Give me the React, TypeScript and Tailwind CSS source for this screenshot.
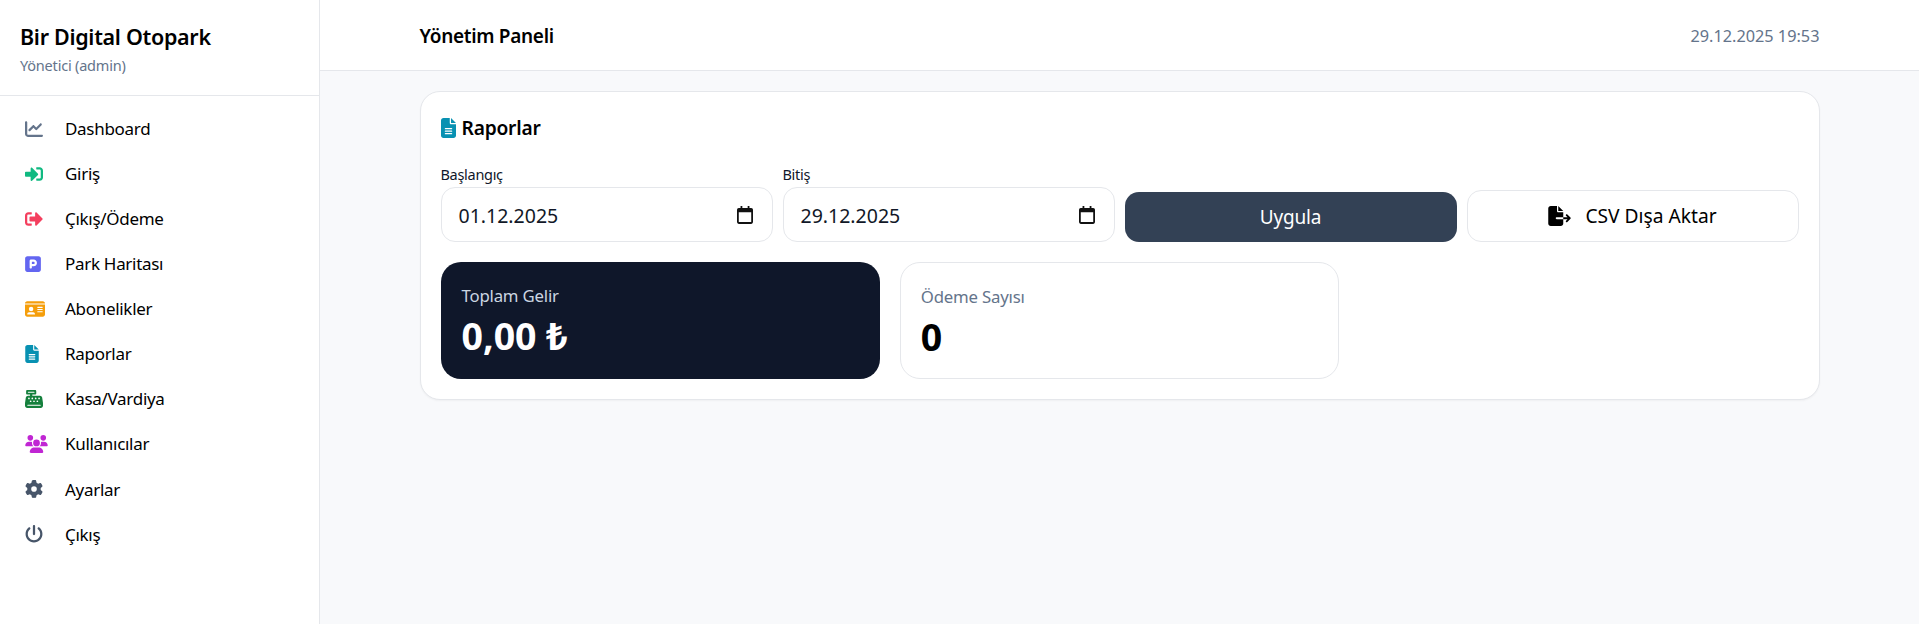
import type { IconType } from "react-icons";
import { FaSignInAlt, FaSignOutAlt } from "react-icons/fa";
import {
  FaCashRegister,
  FaChartLine,
  FaFileExport,
  FaFileLines,
  FaGear,
  FaIdCard,
  FaPowerOff,
  FaSquareParking,
  FaUsers,
} from "react-icons/fa6";

const FONT = "font-['Noto_Sans','Open_Sans',sans-serif]";

const menu: { label: string; icon: IconType; color: string }[] = [
  { label: "Dashboard", icon: FaChartLine, color: "w-[18px] text-[#64748b]" },
  { label: "Giriş", icon: FaSignInAlt, color: "w-[18px] text-[#10b981]" },
  { label: "Çıkış/Ödeme", icon: FaSignOutAlt, color: "w-[18px] text-[#f43f5e]" },
  { label: "Park Haritası", icon: FaSquareParking, color: "w-[16px] text-[#6366f1]" },
  { label: "Abonelikler", icon: FaIdCard, color: "w-[20px] text-[#f59e0b]" },
  { label: "Raporlar", icon: FaFileLines, color: "w-[14px] text-[#0891b2]" },
  { label: "Kasa/Vardiya", icon: FaCashRegister, color: "w-[18px] text-[#15803d]" },
  { label: "Kullanıcılar", icon: FaUsers, color: "w-[23px] text-[#c026d3]" },
  { label: "Ayarlar", icon: FaGear, color: "w-[18px] text-[#475569]" },
  { label: "Çıkış", icon: FaPowerOff, color: "w-[18px] text-[#475569]" },
];

function CalendarIcon() {
  return (
    <svg width="16" height="18" viewBox="0 0 18 20" fill="#111">
      <path d="M4 0h2v2h6V0h2v2h2a2 2 0 0 1 2 2v14a2 2 0 0 1-2 2H2a2 2 0 0 1-2-2V4a2 2 0 0 1 2-2h2V0zM2 7v11h14V7H2z" />
    </svg>
  );
}

function DateField({ label, value }: { label: string; value: string }) {
  return (
    <div>
      <div className="mb-[3px] text-[14.5px] leading-[19px] tracking-[-0.3px] text-[#0f172a]">{label}</div>
      <div className="flex h-[55px] items-center justify-between rounded-[14px] border border-[#e5e7eb] bg-white pr-[19px] pl-[17px] text-[19.5px] text-[#111827]">
        <span className="translate-y-px">{value}</span>
        <CalendarIcon />
      </div>
    </div>
  );
}

export default function App() {
  return (
    <div className={`flex h-[624px] overflow-hidden bg-[#f8f9fb] text-black ${FONT}`}>
      <aside className="h-full w-[320px] shrink-0 border-r border-[#e5e7eb] bg-white">
        <div className="h-[96px] border-b border-[#e5e7eb] pt-[22px] pl-[20px]">
          <div className="text-[21.5px] leading-[30px] font-semibold tracking-[-0.3px]">Bir Digital Otopark</div>
          <div className="mt-[3px] text-[14.5px] leading-[20px] tracking-[-0.2px] text-[#64748b]">Yönetici (admin)</div>
        </div>
        <nav className="pt-[10px]">
          {menu.map((item) => (
            <div key={item.label} className="flex h-[45.1px] items-center pl-[25px] text-[17px] tracking-[-0.3px]">
              <span className="flex w-[40px] shrink-0 items-center">
                <item.icon className={`h-[18px] ${item.color}`} />
              </span>
              {item.label}
            </div>
          ))}
        </nav>
      </aside>
      <div className="min-w-0 flex-1">
        <header className="h-[71px] border-b border-[#e5e7eb] bg-white">
          <div className="mx-auto flex h-full max-w-[1400px] items-center justify-between">
            <div className="translate-y-px text-[19px] font-semibold tracking-[-0.3px]">Yönetim Paneli</div>
            <div className="translate-y-px text-[16.3px] text-[#64748b]">29.12.2025 19:53</div>
          </div>
        </header>
        <main className="mx-auto max-w-[1400px] pt-[20px]">
          <section className="rounded-[20px] border border-[#e5e7eb] bg-white p-[20px] pt-[21px] shadow-[0_1px_2px_rgba(0,0,0,0.04)]">
            <h2 className="mb-[22px] flex items-center gap-[6px] text-[19.2px] leading-[30px] font-semibold tracking-[-0.2px]">
              <FaFileLines className="h-[20px] w-[15px] text-[#0891b2]" />
              Raporlar
            </h2>
            <div className="grid grid-cols-4 items-end gap-[10px]">
              <DateField label="Başlangıç" value="01.12.2025" />
              <DateField label="Bitiş" value="29.12.2025" />
              <button className="h-[50px] rounded-[14px] bg-[#334155] text-[19px] tracking-[-0.2px] text-white">Uygula</button>
              <button className="flex h-[52px] items-center justify-center gap-[14px] rounded-[14px] border border-[#e5e7eb] bg-white text-[19.2px]">
                <FaFileExport className="h-[20px] w-[23px]" />
                CSV Dışa Aktar
              </button>
            </div>
            <div className="mt-[20px] grid grid-cols-3 gap-[20px]">
              <div className="h-[117px] rounded-[20px] bg-[#0f172a] pt-[22px] pl-[21px] text-white">
                <div className="text-[16.8px] leading-[24px] tracking-[-0.2px] text-[#cbd5e1]">Toplam Gelir</div>
                <div className="mt-[4px] text-[37.5px] leading-[48px] font-bold">0,00 ₺</div>
              </div>
              <div className="h-[117px] rounded-[20px] border border-[#e5e7eb] bg-white pt-[22px] pl-[20px]">
                <div className="text-[16.8px] leading-[24px] tracking-[-0.2px] text-[#64748b]">Ödeme Sayısı</div>
                <div className="mt-[4px] text-[37.5px] leading-[48px] font-bold">0</div>
              </div>
              <div />
            </div>
          </section>
        </main>
      </div>
    </div>
  );
}
